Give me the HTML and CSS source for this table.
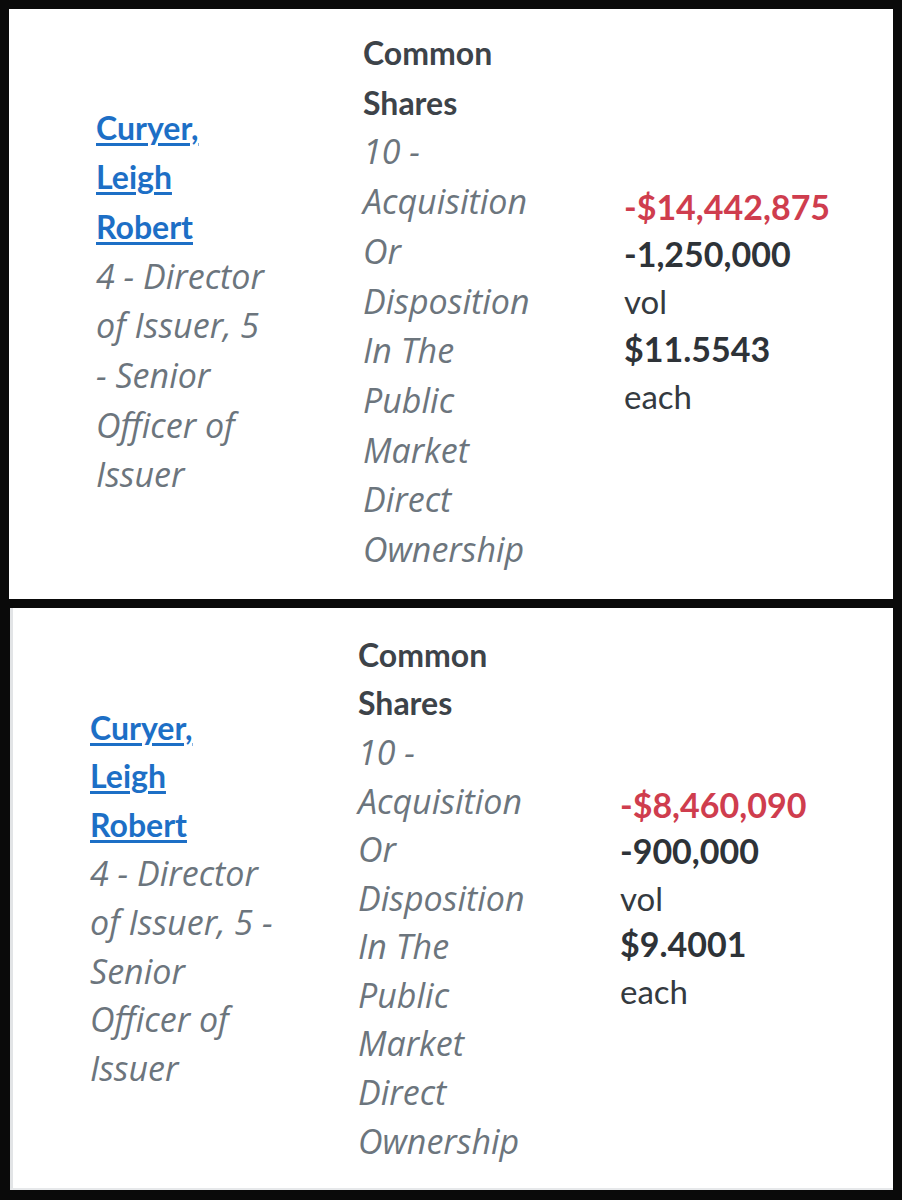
FILE: index.html
```html
<!DOCTYPE html>
<html lang="en">
<head>
<meta charset="utf-8">
<title>Insider trades</title>
<link rel="stylesheet" href="styles.css">
</head>
<body>
<div class="page">
  <section class="trade trade-a">
    <div class="col insider">
      <a class="name" href="#">Curyer,<br>Leigh<br>Robert</a>
      <div class="role">4 - Director<br>of Issuer, 5<br>- Senior<br>Officer of<br>Issuer</div>
    </div>
    <div class="col security">
      <div class="sec-name">Common<br>Shares</div>
      <div class="nature">10 -<br>Acquisition<br>Or<br>Disposition<br>In The<br>Public<br>Market</div>
      <div class="nature">Direct<br>Ownership</div>
    </div>
    <div class="col amounts">
      <div class="total">-$14,442,875</div>
      <div class="qty"><b>-1,250,000</b><br>vol</div>
      <div class="price"><b>$11.5543</b><br>each</div>
    </div>
  </section>
  <section class="trade trade-b">
    <div class="col insider">
      <a class="name" href="#">Curyer,<br>Leigh<br>Robert</a>
      <div class="role">4 - Director<br>of Issuer, 5 -<br>Senior<br>Officer of<br>Issuer</div>
    </div>
    <div class="col security">
      <div class="sec-name">Common<br>Shares</div>
      <div class="nature">10 -<br>Acquisition<br>Or<br>Disposition<br>In The<br>Public<br>Market</div>
      <div class="nature">Direct<br>Ownership</div>
    </div>
    <div class="col amounts">
      <div class="total">-$8,460,090</div>
      <div class="qty"><b>-900,000</b><br>vol</div>
      <div class="price"><b>$9.4001</b><br>each</div>
    </div>
  </section>
</div>
</body>
</html>
```

FILE: styles.css
```css
html, body {
  margin: 0;
  padding: 0;
  background: #0a0a0a;
}

.page {
  display: flex;
  flex-direction: column;
  gap: 9px;
  padding: 9px 9px 9px 9px;
  width: 902px;
  height: 1200px;
  box-sizing: border-box;
}

.trade {
  background: #ffffff;
  display: grid;
  align-items: center;
  font-family: "Lato", "Open Sans", sans-serif;
  font-size: 32px;
  color: #343a40;
}

.trade-a {
  line-height: 49.7px;
  padding: 19px 0 24px 87px;
  grid-template-columns: 267px 261px 1fr;
}

.trade-a .amounts {
  line-height: 47px;
}

.trade-b {
  line-height: 48.6px;
  margin-left: 1px;
  border-left: 3px solid #e2e4e6;
  border-bottom: 2px solid #e6e8ea;
  padding: 23px 0 23px 77px;
  grid-template-columns: 268px 262px 1fr;
}

.trade-b .amounts {
  line-height: 46.5px;
}

.name {
  color: #1d6fc6;
  font-weight: 700;
  text-decoration: underline;
  text-decoration-thickness: 3px;
  text-underline-offset: 3px;
}

.role,
.nature {
  font-family: "Open Sans", sans-serif;
  font-style: italic;
  font-size: 34px;
  color: #6c757d;
}

.sec-name {
  font-weight: 700;
  color: #3d4349;
}

.amounts {
  font-size: 33px;
}

.total {
  font-weight: 700;
  font-size: 34px;
  color: #cf3d4e;
}

.qty b,
.price b {
  font-weight: 700;
  font-size: 34px;
  color: #2e3338;
}
```
